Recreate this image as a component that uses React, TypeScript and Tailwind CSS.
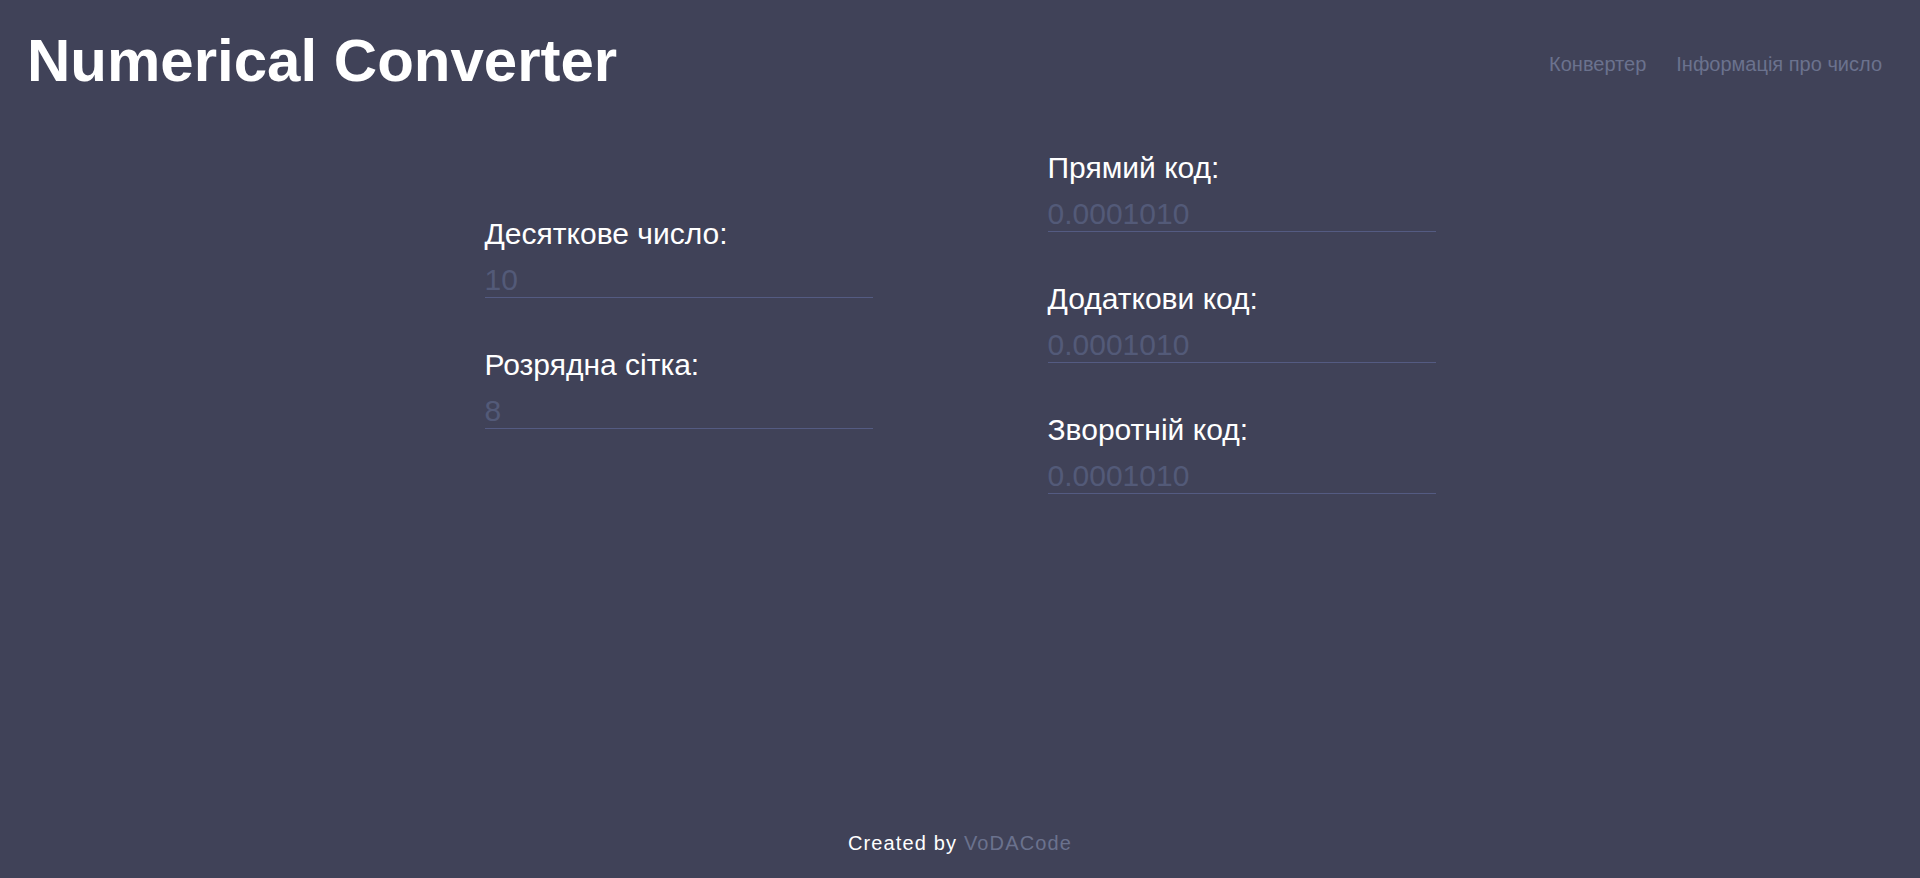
import { useState } from 'react'

const inputFields = [
  { label: 'Десяткове число:', placeholder: '10' },
  { label: 'Розрядна сітка:', placeholder: '8' },
]

const outputFields = [
  { label: 'Прямий код:', placeholder: '0.0001010' },
  { label: 'Додаткови код:', placeholder: '0.0001010' },
  { label: 'Зворотній код:', placeholder: '0.0001010' },
]

function Field({ label, placeholder, readOnly }: { label: string; placeholder: string; readOnly?: boolean }) {
  const [value, setValue] = useState('')
  return (
    <div className="flex flex-col">
      <label className="text-[30px] leading-[34px] text-white">{label}</label>
      <input
        type="text"
        value={value}
        readOnly={readOnly}
        onChange={(e) => setValue(e.target.value)}
        placeholder={placeholder}
        className="mt-[11px] h-[36px] w-full border-b border-[#545B82] bg-transparent pt-[1px] text-[30px] leading-[34px] text-white outline-none placeholder:text-[#535A78]"
      />
    </div>
  )
}

export default function App() {
  return (
    <div
      className="flex h-screen flex-col bg-[#404258]"
      style={{ fontFamily: '"Liberation Sans", Arial, sans-serif' }}
    >
      {/* Header */}
      <header className="flex items-start justify-between pl-[27px] pr-[38px] pt-[31px]">
        <h1 className="text-[60px] font-bold leading-[60px] text-white">Numerical Converter</h1>
        <nav className="mt-[21px] flex gap-[30px] text-[20px] leading-[24px] text-[#6B728E]">
          <a href="#">Конвертер</a>
          <a href="#">Інформація про число</a>
        </nav>
      </header>

      {/* Converter */}
      <main className="flex-1 pt-[60px]">
        <div className="flex items-center justify-center gap-[175px]">
          <div className="flex w-[388px] flex-col gap-[50px]">
            {inputFields.map((f) => (
              <Field key={f.label} label={f.label} placeholder={f.placeholder} />
            ))}
          </div>
          <div className="flex w-[388px] flex-col gap-[50px]">
            {outputFields.map((f) => (
              <Field key={f.label} label={f.label} placeholder={f.placeholder} readOnly />
            ))}
          </div>
        </div>
      </main>

      <footer className="pb-[23px] text-center text-[20px] leading-[24px] tracking-[1.15px] text-white">
        Created by <a href="#" className="text-[#6B728E]">VoDACode</a>
      </footer>
    </div>
  )
}
